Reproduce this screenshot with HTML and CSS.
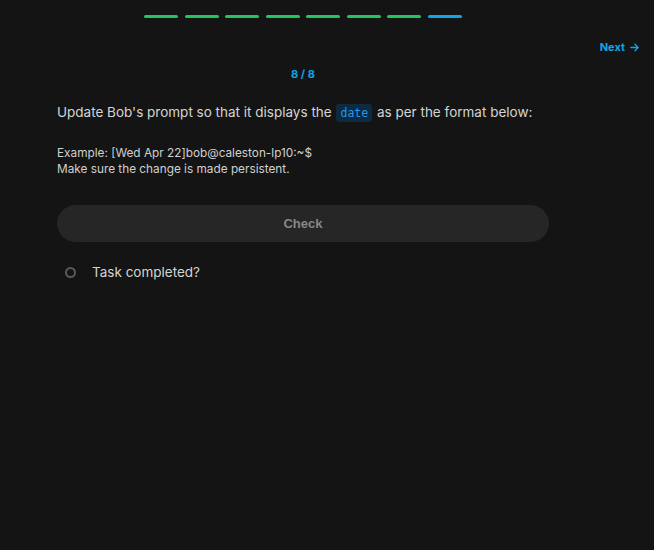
FILE: index.html
```html
<!DOCTYPE html>
<html>
<head>
<meta charset="utf-8">
<link rel="stylesheet" href="styles.css">
</head>
<body>
<div class="page">
  <div class="progress">
    <span class="seg done"></span><span class="seg done"></span><span class="seg done"></span><span class="seg done"></span><span class="seg done"></span><span class="seg done"></span><span class="seg done"></span><span class="seg current"></span>
  </div>
  <div class="nav">
    <a class="next">Next <svg width="11" height="11" viewBox="0 0 12 12"><path d="M2 6h8M6.5 2.5 10 6l-3.5 3.5" fill="none" stroke="currentColor" stroke-width="1.4" stroke-linecap="round" stroke-linejoin="round"/></svg></a>
  </div>
  <div class="content">
    <div class="count">8 / 8</div>
    <p class="question">Update Bob's prompt so that it displays the <code class="chip">date</code> as per the format below:</p>
    <p class="details">Example: [Wed Apr 22]bob@caleston-lp10:~$<br>Make sure the change is made persistent.</p>
    <button class="check">Check</button>
    <label class="task"><span class="ring"></span><span>Task completed?</span></label>
  </div>
</div>
</body>
</html>
```
FILE: styles.css
```css
html, body {
  margin: 0;
  padding: 0;
  background: #141414;
  height: 100%;
}
body {
  font-family: Inter, "Noto Sans", sans-serif;
  color: #d4d4d4;
}
.page {
  width: 654px;
}
.progress {
  display: flex;
  gap: 6.5px;
  width: 492px;
  margin-left: 57px;
  justify-content: center;
  padding-top: 15px;
}
.seg {
  width: 34px;
  height: 3px;
  border-radius: 2px;
  background: #22c55e;
}
.seg.current {
  background: #0ea5e9;
}
.nav {
  display: flex;
  justify-content: flex-end;
  padding: 22px 14px 0 0;
}
.next {
  display: flex;
  align-items: center;
  gap: 4px;
  color: #0ea5e9;
  font-size: 11px;
  font-weight: 700;
  line-height: 14px;
}
.content {
  width: 492px;
  margin-left: 57px;
}
.count {
  text-align: center;
  color: #0ea5e9;
  font-size: 11px;
  font-weight: 700;
  line-height: 14px;
  margin-top: 13px;
}
.question {
  margin: 19px 0 0;
  font-size: 13.5px;
  line-height: 24px;
  white-space: nowrap;
  color: #d4d4d4;
}
.chip {
  font-family: "DejaVu Sans Mono", "Liberation Mono", monospace;
  font-size: 11.5px;
  color: #1e9bf0;
  background: #0e2a40;
  border-radius: 3px;
  padding: 2px 4px;
  margin: 0 1px;
}
.details {
  margin: 20px 0 0;
  font-size: 11.8px;
  line-height: 16px;
  color: #d0d0d0;
}
.check {
  display: block;
  width: 492px;
  height: 37px;
  margin-top: 28px;
  border: none;
  border-radius: 19px;
  background: #262626;
  color: #878787;
  font-family: "Liberation Sans", Arial, sans-serif;
  font-weight: 700;
  font-size: 13px;
}
.task {
  display: flex;
  align-items: center;
  gap: 16px;
  margin-top: 20px;
  padding-left: 8px;
  font-size: 13.5px;
  line-height: 20px;
  color: #d4d4d4;
}
.ring {
  width: 7px;
  height: 7px;
  border: 2px solid #595959;
  border-radius: 50%;
}
```
